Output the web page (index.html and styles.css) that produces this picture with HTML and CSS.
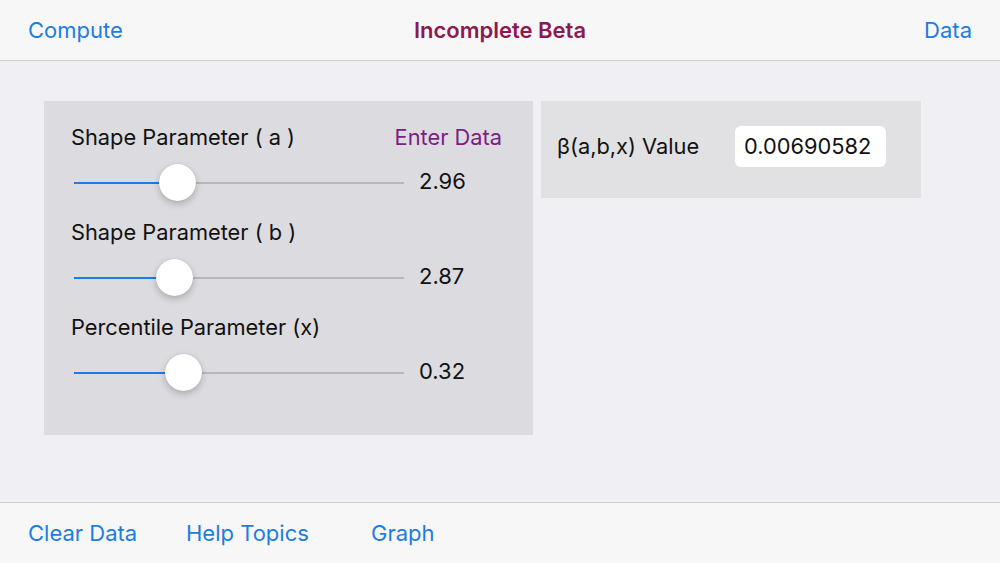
FILE: index.html
```html
<!DOCTYPE html>
<html>
<head>
	<meta charset="UTF-8">
	<title>Incomplete Beta</title>
	<link rel="stylesheet" href="styles.css">
</head>
<body>
	<div class="top-bar">
		<a class="bar-link" href="javascript:">Compute</a>
		<span class="bar-title">Incomplete Beta</span>
		<a class="bar-link right" href="javascript:">Data</a>
	</div>

	<div class="content">
		<div class="param-panel">
			<div class="param">
				<div class="param-head">
					<span class="param-label">Shape Parameter ( a )</span>
					<a class="enter-data" href="javascript:">Enter Data</a>
				</div>
				<div class="slider-row">
					<div class="slider">
						<div class="slider-fill" style="width: 31.2%;"></div>
						<div class="slider-thumb" style="left: 31.2%;"></div>
					</div>
					<span class="slider-value">2.96</span>
				</div>
			</div>
			<div class="param">
				<div class="param-head">
					<span class="param-label">Shape Parameter ( b )</span>
				</div>
				<div class="slider-row">
					<div class="slider">
						<div class="slider-fill" style="width: 30.3%;"></div>
						<div class="slider-thumb" style="left: 30.3%;"></div>
					</div>
					<span class="slider-value">2.87</span>
				</div>
			</div>
			<div class="param">
				<div class="param-head">
					<span class="param-label">Percentile Parameter (x)</span>
				</div>
				<div class="slider-row">
					<div class="slider">
						<div class="slider-fill" style="width: 32.9%;"></div>
						<div class="slider-thumb" style="left: 32.9%;"></div>
					</div>
					<span class="slider-value">0.32</span>
				</div>
			</div>
		</div>

		<div class="result-panel">
			<span class="result-label">β(a,b,x) Value</span>
			<span class="result-box">0.00690582</span>
		</div>
	</div>

	<div class="bottom-bar">
		<a class="tool-link clear" href="javascript:">Clear Data</a>
		<a class="tool-link help" href="javascript:">Help Topics</a>
		<a class="tool-link" href="javascript:">Graph</a>
	</div>
</body>
</html>
```

FILE: styles.css
```css
* {
	margin: 0;
	padding: 0;
	box-sizing: border-box;
	text-decoration: none;
}
html, body {
	width: 1000px;
	height: 563px;
	overflow: hidden;
}
body {
	font-family: "Inter", "Liberation Sans", sans-serif;
	background: #efeff4;
	color: #111;
	display: flex;
	flex-direction: column;
}
.top-bar {
	height: 61px;
	flex: none;
	background: #f7f7f8;
	border-bottom: 1px solid #cdcdd1;
	display: grid;
	grid-template-columns: 1fr auto 1fr;
	align-items: center;
	padding: 0 28px;
	font-size: 22px;
}
.bar-link {
	color: #1d7ddf;
}
.bar-link.right {
	justify-self: end;
}
.bar-title {
	color: #8c1a4f;
	font-weight: 600;
}
.content {
	flex: 1;
	display: flex;
	align-items: flex-start;
	gap: 8px;
	padding: 40px 0 0 44px;
}
.param-panel {
	width: 489px;
	height: 334px;
	background: #dcdce0;
	padding: 22px 31px 0 27px;
}
.param {
	margin-bottom: 15px;
}
.param-head {
	height: 28px;
	display: flex;
	align-items: center;
	justify-content: space-between;
	font-size: 21.8px;
	margin-bottom: 12px;
}
.enter-data {
	color: #7e1b86;
}
.slider-row {
	height: 40px;
	display: flex;
	align-items: center;
}
.slider {
	position: relative;
	width: 330px;
	height: 2px;
	margin-left: 3px;
	background: #b7b7ba;
}
.slider-fill {
	height: 2px;
	background: #1b7bec;
}
.slider-thumb {
	position: absolute;
	top: -18px;
	width: 37px;
	height: 37px;
	margin-left: -18px;
	border-radius: 50%;
	background: #fff;
	box-shadow: 0 3px 7px rgba(0, 0, 0, .22), 0 0 1px rgba(0, 0, 0, .2);
}
.slider-value {
	margin: 0 0 4px 15px;
	font-size: 22px;
}
.result-panel {
	width: 380px;
	height: 97px;
	background: #e1e1e3;
	display: flex;
	align-items: flex-start;
	padding: 25px 0 0 16px;
}
.result-label {
	font-size: 21.8px;
	line-height: 41px;
	width: 178px;
}
.result-box {
	width: 151px;
	height: 41px;
	background: #fff;
	border-radius: 6px;
	font-size: 21.8px;
	line-height: 41px;
	padding-left: 9px;
}
.bottom-bar {
	height: 61px;
	flex: none;
	background: #f7f7f8;
	border-top: 1px solid #cdcdd1;
	display: flex;
	align-items: center;
	padding: 0 0 0 28px;
	font-size: 22px;
}
.tool-link {
	color: #1d7ddf;
}
.clear {
	width: 158px;
}
.help {
	width: 185px;
}
```
